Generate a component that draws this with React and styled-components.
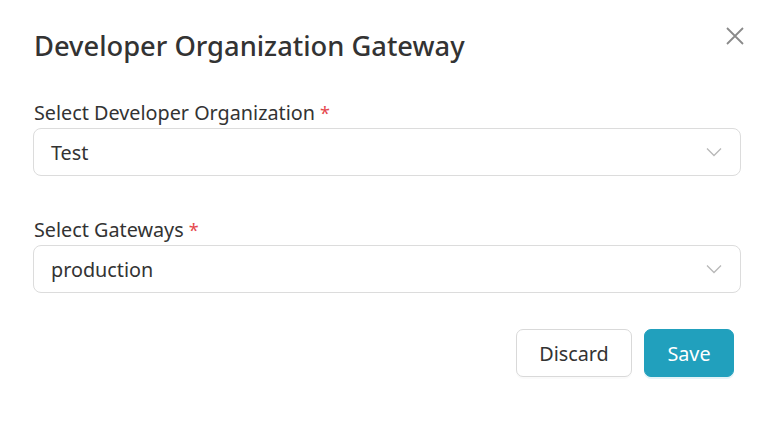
import React from "react";
import styled, { createGlobalStyle } from "styled-components";

const GlobalStyle = createGlobalStyle`
  body {
    margin: 0;
    background: #ffffff;
    font-family: "Noto Sans", "Open Sans", sans-serif;
  }
`;

const Modal = styled.div`
  position: relative;
  width: 774px;
  height: 436px;
  box-sizing: border-box;
  padding: 26px 33px 0 33px;
  background: #ffffff;
`;

const Title = styled.h2`
  margin: 0 0 34px 1px;
  font-size: 27.3px;
  font-weight: 500;
  color: #333333;
  line-height: 40px;
`;

const CloseButton = styled.button`
  position: absolute;
  top: 24px;
  right: 27px;
  width: 24px;
  height: 24px;
  padding: 0;
  border: none;
  background: transparent;
  cursor: pointer;
  display: flex;
  align-items: center;
  justify-content: center;
`;

const Field = styled.div`
  display: flex;
  flex-direction: column;
  margin-bottom: ${(p) => p.$gap || 0}px;
`;

const Label = styled.label`
  font-size: 19.8px;
  color: #333333;
  line-height: 26px;
  margin: 0 0 2px 1px;
`;

const Required = styled.span`
  color: #e5484d;
  margin-left: 5px;
  font-size: 18px;
`;

const SelectBox = styled.div`
  height: 48px;
  box-sizing: border-box;
  border: 1px solid #dcdcdc;
  border-radius: 8px;
  display: flex;
  align-items: center;
  justify-content: space-between;
  padding: 0 18px 0 17px;
  font-size: 19.8px;
  color: #333333;
`;

const Actions = styled.div`
  display: flex;
  justify-content: flex-end;
  gap: 12px;
  margin-top: 36px;
  padding-right: 7px;
`;

const Button = styled.button`
  height: 48px;
  width: ${(p) => (p.$primary ? 90 : 116)}px;
  padding: 0;
  border-radius: 7px;
  font-family: inherit;
  font-size: 19.8px;
  cursor: pointer;
  border: 1px solid ${(p) => (p.$primary ? "#21a0bd" : "#d9d9d9")};
  background: ${(p) => (p.$primary ? "#21a0bd" : "#ffffff")};
  color: ${(p) => (p.$primary ? "#ffffff" : "#333333")};
  box-shadow: ${(p) => (p.$primary ? "0 2px 0 rgba(33,160,189,0.12)" : "0 2px 0 rgba(0,0,0,0.02)")};
`;

const Chevron = () => (
  <svg width="16" height="10" viewBox="0 0 16 10" fill="none">
    <path d="M1 1.5 L8 8.5 L15 1.5" stroke="#b8b8b8" strokeWidth="1.3" />
  </svg>
);

const CloseIcon = () => (
  <svg width="20" height="20" viewBox="0 0 20 20" fill="none">
    <path d="M2 2 L18 18 M18 2 L2 18" stroke="#8a8a8a" strokeWidth="1.8" />
  </svg>
);

export default function App() {
  return (
    <>
      <GlobalStyle />
      <Modal>
        <CloseButton aria-label="Close">
          <CloseIcon />
        </CloseButton>
        <Title>Developer Organization Gateway</Title>
        <Field $gap={41}>
          <Label>
            Select Developer Organization<Required>*</Required>
          </Label>
          <SelectBox>
            <span>Test</span>
            <Chevron />
          </SelectBox>
        </Field>
        <Field>
          <Label>
            Select Gateways<Required>*</Required>
          </Label>
          <SelectBox>
            <span>production</span>
            <Chevron />
          </SelectBox>
        </Field>
        <Actions>
          <Button>Discard</Button>
          <Button $primary>Save</Button>
        </Actions>
      </Modal>
    </>
  );
}
